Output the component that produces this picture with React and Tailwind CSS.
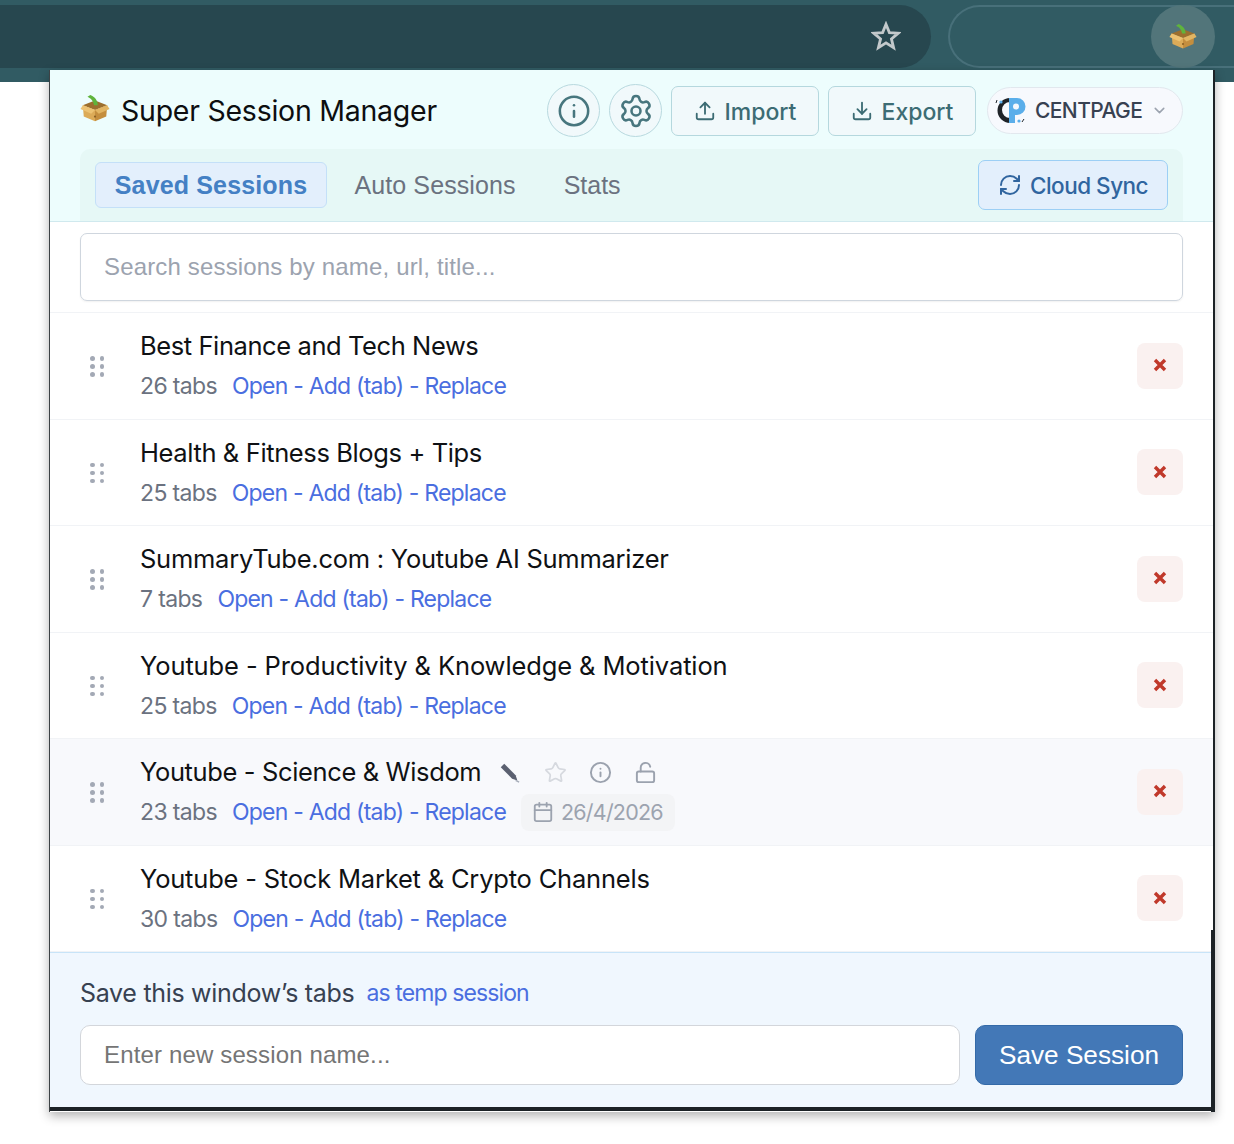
import React from "react";
import { Info, Settings, Upload, Download, RefreshCw, Calendar, LockOpen, ChevronDown, Star } from "lucide-react";

const Box = ({ className }) => (
  <svg viewBox="0 0 32 32" className={className}>
    <path d="M3 12 L16 7 L29 12 L16 17 Z" fill="#9c6f2e" />
    <path d="M3 12 L16 17 L16 29 L4 24 Z" fill="#dcab58" />
    <path d="M29 12 L16 17 L16 29 L28 24 Z" fill="#c48e3e" />
    <path d="M3 12 L0.5 16 L12 21 L16 17 Z" fill="#ecc272" />
    <path d="M29 12 L31.5 16 L20 21 L16 17 Z" fill="#e2b563" />
    <path d="M15 12 C14 7 12 5 8 3 L11 1 C16 3 19 7 19 12 Z" fill="#5fb43c" />
    <circle cx="16" cy="24" r="1.2" fill="#8d6226" />
  </svg>
);

const Logo = () => (
  <svg viewBox="0 0 32 28" className="w-[32px] h-[28px] shrink-0">
    <path d="M15 1 A12.5 12.5 0 1 0 15 26 L15 21 A7.5 7.5 0 0 1 15 5 Z" fill="#1f2328" />
    <path d="M14 1 H22 A8.5 8.5 0 0 1 22 18 H20 V26 H14 Z" fill="#5aaeea" />
    <circle cx="21" cy="9.5" r="3" fill="#f4f8fd" />
    <circle cx="6" cy="5" r="1.6" fill="#5aaeea" />
    <circle cx="24" cy="24" r="1.6" fill="#5aaeea" />
    <path d="M1 6 L2 3 M27 25 L29 22" stroke="#1f2328" strokeWidth="1" />
  </svg>
);

const Grip = () => (
  <div className="grid grid-cols-2 gap-x-[5.5px] gap-y-[3.5px] w-[14px] shrink-0 mt-[1px]">
    {[0, 1, 2, 3, 4, 5].map((i) => (
      <span key={i} className="w-[4.5px] h-[4.5px] rounded-full bg-[#a3a9b5]" />
    ))}
  </div>
);

const sessions = [
  { name: "Best Finance and Tech News", tabs: "26 tabs", t: "tracking-[-0.41px]" },
  { name: "Health & Fitness Blogs + Tips", tabs: "25 tabs", t: "tracking-[-0.38px]" },
  { name: "SummaryTube.com : Youtube AI Summarizer", tabs: "7 tabs", t: "tracking-[-0.25px]" },
  { name: "Youtube - Productivity & Knowledge & Motivation", tabs: "25 tabs", t: "tracking-[-0.11px]" },
  { name: "Youtube - Science & Wisdom", tabs: "23 tabs", t: "tracking-[-0.37px]", hover: true },
  { name: "Youtube - Stock Market & Crypto Channels", tabs: "30 tabs", t: "tracking-[-0.2px]" },
];

const Row = ({ s }) => (
  <div className={`h-[106.5px] flex items-center pl-[40px] pr-[31px] border-b border-[#f1f3f6] ${s.hover ? "bg-[#f8f9fc]" : "bg-white"}`}>
    <Grip />
    <div className="ml-[36px] flex-1 min-w-0">
      <div className="flex items-center h-[30px] mt-[4px]">
        <span className={`text-[25.5px] leading-[30px] text-[#0f1114] whitespace-nowrap ${s.t}`}>{s.name}</span>
        {s.hover && (
          <div className="flex items-center">
            <svg viewBox="0 0 24 24" className="w-[21px] h-[21px] ml-[18px]">
              <path d="M2 6 L6 2 L19 15 L21 21 L15 19 Z" fill="#5b6070" />
              <path d="M19 21 L23 23" stroke="#a6acb8" strokeWidth="1.5" />
            </svg>
            <Star className="w-[23px] h-[23px] ml-[24px] text-[#d6d9df]" strokeWidth={1.8} />
            <Info className="w-[23px] h-[23px] ml-[22px] text-[#9ba2ae]" strokeWidth={2} />
            <LockOpen className="w-[23px] h-[23px] ml-[22px] text-[#9ba2ae]" strokeWidth={2} />
          </div>
        )}
      </div>
      <div className="flex items-center mt-[7px] h-[36px] text-[23px] whitespace-nowrap">
        <span className="text-[#6b7280] tracking-[-0.65px]">{s.tabs}</span>
        <span className="ml-[15px] text-[#4a6ee0] tracking-[-0.78px]">Open - Add (tab) - Replace</span>
        {s.hover && (
          <span className="ml-[15px] h-[37px] pl-[11px] pr-[12px] rounded-[8px] bg-[#f3f4f6] flex items-center text-[#9ca3af] text-[21.5px] tracking-[-0.8px]">
            <Calendar className="w-[22px] h-[22px] mr-[7px] text-[#9ca3af]" strokeWidth={2} />
            26/4/2026
          </span>
        )}
      </div>
    </div>
    <button className="w-[46px] h-[46px] rounded-[8px] bg-[#faf1f0] flex items-center justify-center shrink-0 pb-[1px]">
      <svg viewBox="0 0 14 14" className="w-[14px] h-[14px]">
        <path d="M2 2 L12 12 M12 2 L2 12" stroke="#c0392b" strokeWidth="3.4" strokeLinecap="butt" />
      </svg>
    </button>
  </div>
);

export default function App() {
  return (
    <div className="w-[1234px] h-[1144px] bg-white overflow-hidden font-['Inter',sans-serif]">
      <div className="h-[82px] bg-[#315b63] pt-[5px] flex items-start">
        <div className="w-[931px] h-[63px] bg-[#27474f] rounded-r-[32px] flex items-center justify-end pr-[30px]">
          <svg viewBox="0 0 32 32" className="w-[30px] h-[30px] mt-[-1px]">
            <path d="M16 3.5 L19.6 12.4 L29 13 L21.8 19.1 L24.1 28.4 L16 23.3 L7.9 28.4 L10.2 19.1 L3 13 L12.4 12.4 Z" fill="none" stroke="#c3c9cb" strokeWidth="3" strokeLinejoin="miter" />
          </svg>
        </div>
        <div className="ml-[17px] flex-1 h-[63px] rounded-l-[32px] border-2 border-[#48707a] border-r-0 relative">
          <div className="absolute right-[19px] top-[-2px] w-[64px] h-[63px] rounded-full bg-[#52757a] flex items-center justify-center">
            <Box className="w-[28px] h-[28px]" />
          </div>
        </div>
      </div>

      <div className="relative mt-[-12px] ml-[49px] w-[1166px] h-[1042px] border-l-[1.5px] border-[#3d4245] shadow-[0_4px_10px_rgba(0,0,0,0.3)] bg-white">
        <div className="absolute right-0 top-0 bottom-[180px] w-[2px] bg-[#1c2226]" />
        <div className="absolute right-0 bottom-0 h-[182px] w-[4px] bg-[#1c2226]" />
        <div className="w-[1164px] h-[1037px] flex flex-col">
          <div className="bg-[#edfdfd] border-b border-[#d0e9ee] h-[152px] pl-[30px] pr-[31px] flex flex-col">
            <div className="h-[80px] pt-[2px] flex items-center">
              <Box className="w-[30px] h-[30px] mr-[11px] mt-[-4px]" />
              <span className="text-[28.5px] text-[#0c0e10] tracking-[-0.25px] flex-1 whitespace-nowrap mt-[1px]">Super Session Manager</span>
              <div className="flex items-center">
                <button className="w-[53px] h-[53px] rounded-full border border-[#b8d9df] bg-[#f1f9fb] flex items-center justify-center">
                  <Info className="w-[34px] h-[34px] text-[#47767e]" strokeWidth={1.8} />
                </button>
                <button className="ml-[9px] w-[53px] h-[53px] rounded-full border border-[#b8d9df] bg-[#f1f9fb] flex items-center justify-center">
                  <Settings className="w-[36px] h-[36px] text-[#47767e]" strokeWidth={1.7} />
                </button>
                <button className="ml-[9px] w-[148px] h-[50px] rounded-[7px] border border-[#b5d8de] bg-[#f1f9fb] flex items-center justify-center text-[#3c6c74] text-[23px] font-medium">
                  <Upload className="w-[22px] h-[22px] mr-[9px]" strokeWidth={2} />
                  <span className="mt-[3px]">Import</span>
                </button>
                <button className="ml-[9px] w-[148px] h-[50px] rounded-[7px] border border-[#b5d8de] bg-[#f1f9fb] flex items-center justify-center text-[#3c6c74] text-[23px] font-medium">
                  <Download className="w-[22px] h-[22px] mr-[9px]" strokeWidth={2} />
                  <span className="mt-[3px]">Export</span>
                </button>
                <div className="ml-[11px] w-[196px] h-[47px] rounded-full border border-[#e2e8ee] bg-[#f7f9fd] flex items-center pl-[7px] pr-[14px]">
                  <Logo />
                  <span className="ml-[8px] mt-[1px] text-[21px] font-medium text-[#374151] tracking-[-0.6px] flex-1">CENTPAGE</span>
                  <ChevronDown className="w-[17px] h-[17px] text-[#9ca3af]" strokeWidth={2.2} />
                </div>
              </div>
            </div>
            <div className="h-[72px] rounded-t-[10px] bg-[#e6f8f6] flex items-center pl-[15px] pr-[15px] font-['Liberation_Sans',sans-serif]">
              <button className="w-[232px] h-[46px] pt-[1px] rounded-[6px] bg-[#e3effc] border border-[#c4e0f8] text-[#4480c4] text-[25px] font-bold tracking-[0.15px]">Saved Sessions</button>
              <span className="ml-[27.5px] pt-[2px] text-[25px] text-[#6b7280] tracking-[0.1px]">Auto Sessions</span>
              <span className="ml-[48px] pt-[2px] text-[25px] text-[#6b7280] flex-1">Stats</span>
              <button className="w-[190px] h-[50px] rounded-[7px] bg-[#e3effc] border border-[#9ccff5] flex items-center justify-center text-[#30659f] text-[22.5px] font-medium font-['Inter',sans-serif] tracking-[-0.5px]">
                <RefreshCw className="w-[24px] h-[24px] mr-[8px]" strokeWidth={2} />
                <span className="mt-[1px]">Cloud Sync</span>
              </button>
            </div>
          </div>

          <div className="h-[91px] bg-white pl-[30px] pr-[31px] pt-[11px] border-b border-[#f1f3f6]">
            <div className="h-[68px] border border-[#cfd6de] rounded-[7px] shadow-[0_1px_2px_rgba(0,0,0,0.06)] flex items-center pl-[23px] font-['Liberation_Sans',sans-serif] text-[24px] tracking-[0.16px] text-[#9ca3af]">
              Search sessions by name, url, title...
            </div>
          </div>

          {sessions.map((s) => <Row key={s.name} s={s} />)}

          <div className="flex-1 bg-[#f0f7fe] border-t border-[#c8e4f8] pl-[30px] pr-[31px] pt-[25px]">
            <div className="flex items-center h-[32px] text-[25px] whitespace-nowrap">
              <span className="text-[#374151] tracking-[-0.3px]">Save this window’s tabs</span>
              <span className="ml-[12px] mt-[-1px] text-[#4a6ee0] text-[23px] tracking-[-0.9px]">as temp session</span>
            </div>
            <div className="flex items-center mt-[15px]">
              <div className="flex-1 h-[60px] bg-white border border-[#d3d6db] rounded-[10px] flex items-center pl-[23px] font-['Liberation_Sans',sans-serif] text-[24px] tracking-[0.15px] text-[#757575]">
                Enter new session name...
              </div>
              <button className="ml-[15px] w-[208px] h-[60px] pt-[1px] rounded-[10px] bg-[#4378b7] border border-[#346aa8] text-white font-['Liberation_Sans',sans-serif] text-[26.2px]">Save Session</button>
            </div>
          </div>
        </div>
        <div className="h-[4px] bg-[#1c2226] w-full" />
      </div>
    </div>
  );
}
